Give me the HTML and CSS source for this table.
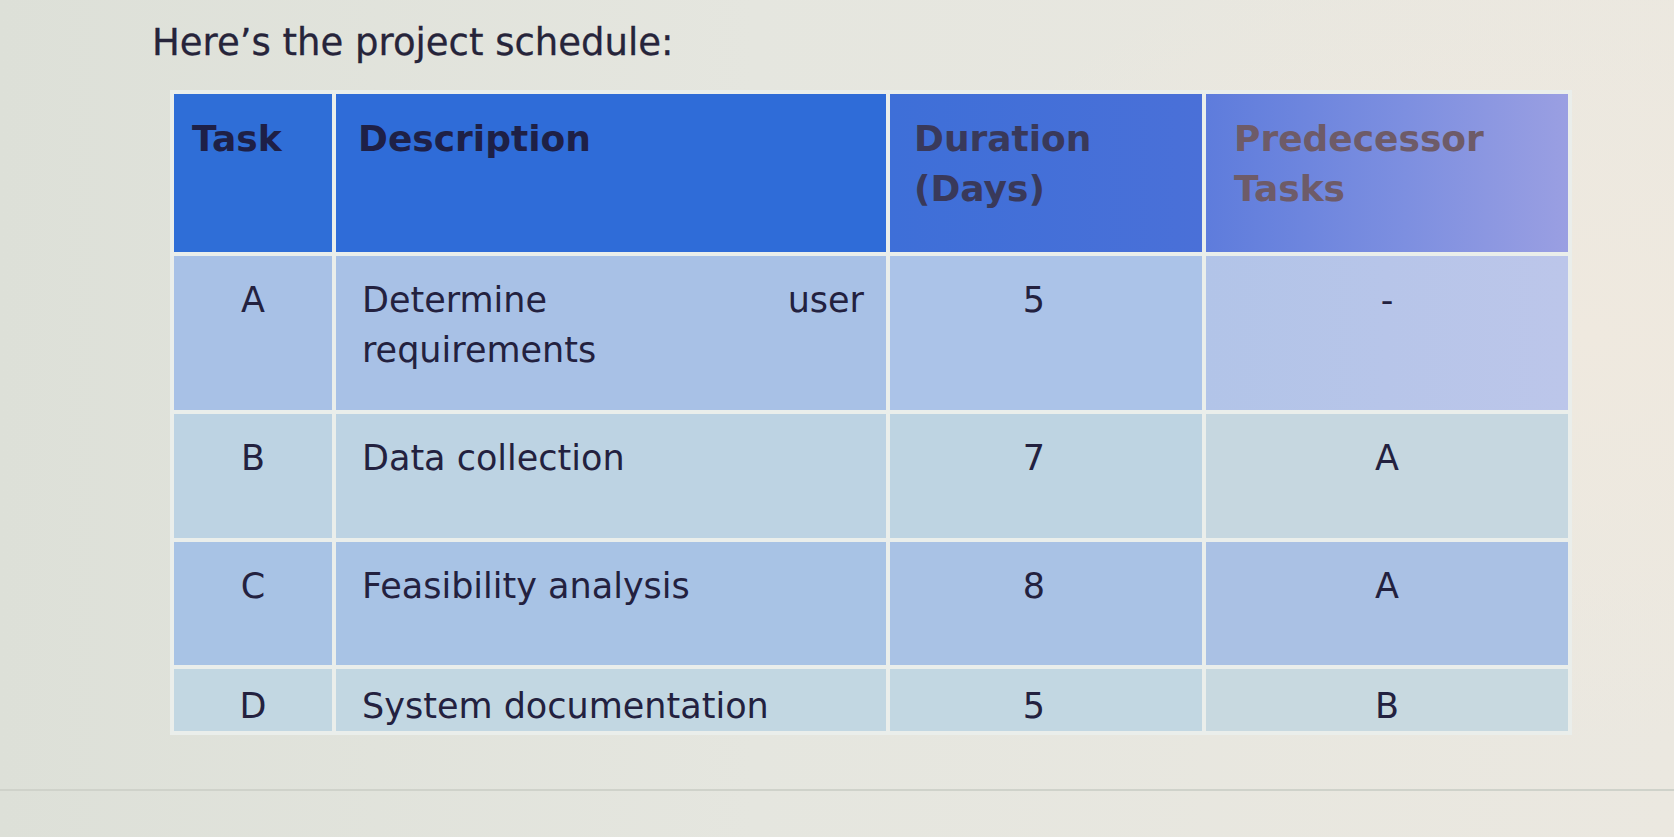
FILE: index.html
```html
<!DOCTYPE html>
<html lang="en">
<head>
<meta charset="utf-8">
<title>Project schedule</title>
<link rel="stylesheet" href="styles.css">
</head>
<body>
<div class="page">
  <h1 class="title">Here’s the project schedule:</h1>
  <table class="schedule">
    <colgroup>
      <col class="c-task">
      <col class="c-desc">
      <col class="c-dur">
      <col class="c-pred">
    </colgroup>
    <thead>
      <tr class="head">
        <th class="h-task">Task</th>
        <th class="h-desc">Description</th>
        <th class="h-dur">Duration<br>(Days)</th>
        <th class="h-pred">Predecessor<br>Tasks</th>
      </tr>
    </thead>
    <tbody>
      <tr class="row row-a">
        <td class="task">A</td>
        <td class="desc">Determine user requirements</td>
        <td class="dur">5</td>
        <td class="pred">-</td>
      </tr>
      <tr class="row row-b">
        <td class="task">B</td>
        <td class="desc">Data collection</td>
        <td class="dur">7</td>
        <td class="pred">A</td>
      </tr>
      <tr class="row row-c">
        <td class="task">C</td>
        <td class="desc">Feasibility analysis</td>
        <td class="dur">8</td>
        <td class="pred">A</td>
      </tr>
      <tr class="row row-d">
        <td class="task">D</td>
        <td class="desc">System documentation</td>
        <td class="dur">5</td>
        <td class="pred">B</td>
      </tr>
    </tbody>
  </table>
  <div class="rule"></div>
</div>
</body>
</html>
```

FILE: styles.css
```css
html, body {
  margin: 0;
  padding: 0;
  height: 100%;
}

body {
  font-family: "DejaVu Sans", Verdana, sans-serif;
  background:
    radial-gradient(ellipse 60% 70% at 95% 40%, #efe9df 0%, rgba(239,233,223,0) 70%),
    linear-gradient(to right, #dde0d8 0%, #e5e6df 45%, #ebe8e0 100%);
  color: #24223e;
  overflow: hidden;
}

.page {
  padding: 21px 0 0 152px;
}

.title {
  margin: 0;
  font-size: 37px;
  font-weight: normal;
  line-height: 43px;
  color: #26243a;
  -webkit-text-stroke: 0.3px #26243a;
}

.schedule {
  margin: 26px 0 0 18px;
  border-collapse: separate;
  border-spacing: 4px;
  background: #eaeeeb;
  table-layout: fixed;
  width: 1402px;
}

.c-task { width: 158px; }
.c-desc { width: 550px; }
.c-dur  { width: 312px; }
.c-pred { width: 362px; }

th, td {
  vertical-align: top;
  padding: 0;
}

/* header */
.head th {
  height: 158px;
  box-sizing: border-box;
  padding: 20px 20px 0 22px;
  font-size: 36px;
  font-weight: bold;
  line-height: 50px;
  text-align: left;
}

.h-task {
  background: #2f6ed7;
  color: #1e2046;
  padding-left: 18px !important;
}
.h-desc {
  background: #2f6cd8;
  color: #1e2046;
}
.h-dur {
  background: linear-gradient(to right, #3e6fd8, #4a70d8);
  color: #39395a;
  padding-left: 24px !important;
}
.h-pred {
  background: linear-gradient(to right, #5e7cdc 0%, #7d8fe0 55%, #9a9fe2 100%);
  color: #6e5b68;
  padding-left: 28px !important;
}

/* body rows */
.row td {
  box-sizing: border-box;
  padding-top: 19px;
  font-size: 35px;
  line-height: 50px;
  color: #23213f;
}

.task, .dur, .pred { text-align: center; }

.dur { padding-right: 24px !important; }

.desc {
  text-align: justify;
  padding-left: 26px !important;
  padding-right: 22px !important;
}

.row-a td { height: 154px; background: #a8c1e6; }
.row-a .dur { background: #abc3e8; }
.row-a .pred { background: linear-gradient(to right, #b2c4e8, #bcc6ea); }

.row-b td { height: 124px; background: #bdd3e3; }
.row-b .dur { background: #bed4e2; }
.row-b .pred { background: #c6d7e0; }

.row-c td { height: 123px; background: #a8c3e5; }
.row-c .dur { background: #a9c2e5; }
.row-c .pred { background: #aac1e4; }

.row-d td { height: 58px; background: #c2d7e2; padding-top: 12px; }
.row-d .pred { background: #c8d9e0; }

.rule {
  margin: 54px 0 0 -152px;
  border-top: 2px solid #cfd2ca;
}
```
